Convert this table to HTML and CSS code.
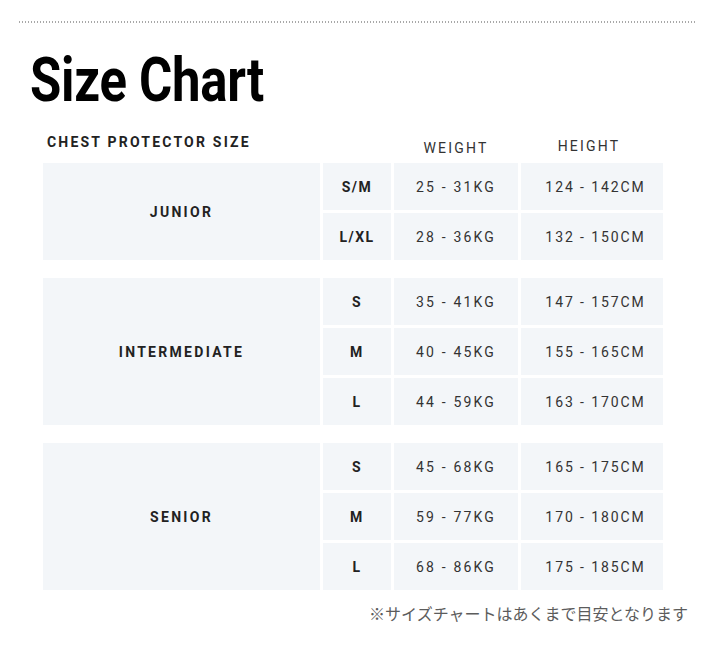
FILE: index.html
```html
<!DOCTYPE html>
<html lang="ja">
<head>
<meta charset="utf-8">
<title>Size Chart</title>
<link rel="stylesheet" href="styles.css">
</head>
<body>
<div class="page">
  <div class="rule"></div>
  <h1 class="title"><span class="title-text">Size Chart</span></h1>
  <div class="chart">
    <div class="head">
      <div class="head-main">CHEST PROTECTOR SIZE</div>
      <div class="head-weight">WEIGHT</div>
      <div class="head-height">HEIGHT</div>
    </div>
    <div class="block">
      <div class="cat rows-2">JUNIOR</div>
      <div class="size">S/M</div><div class="val">25 - 31KG</div><div class="val hgt">124 - 142CM</div>
      <div class="size">L/XL</div><div class="val">28 - 36KG</div><div class="val hgt">132 - 150CM</div>
    </div>
    <div class="block">
      <div class="cat rows-3">INTERMEDIATE</div>
      <div class="size">S</div><div class="val">35 - 41KG</div><div class="val hgt">147 - 157CM</div>
      <div class="size">M</div><div class="val">40 - 45KG</div><div class="val hgt">155 - 165CM</div>
      <div class="size">L</div><div class="val">44 - 59KG</div><div class="val hgt">163 - 170CM</div>
    </div>
    <div class="block">
      <div class="cat rows-3">SENIOR</div>
      <div class="size">S</div><div class="val">45 - 68KG</div><div class="val hgt">165 - 175CM</div>
      <div class="size">M</div><div class="val">59 - 77KG</div><div class="val hgt">170 - 180CM</div>
      <div class="size">L</div><div class="val">68 - 86KG</div><div class="val hgt">175 - 185CM</div>
    </div>
  </div>
  <p class="note">※サイズチャートはあくまで目安となります</p>
</div>
</body>
</html>
```
FILE: styles.css
```css
html, body {
  margin: 0;
  padding: 0;
  background: #ffffff;
}
.page {
  width: 720px;
  height: 646px;
  padding-top: 21px;
  box-sizing: border-box;
  font-family: Roboto, "Noto Sans", sans-serif;
  color: #222;
}
.rule {
  margin-left: 19px;
  width: 678px;
  height: 2px;
  background: repeating-linear-gradient(to right, #a8a8a8 0 1.5px, transparent 1.5px 3px);
}
.title {
  margin: 26px 0 0 30px;
  font-family: Roboto, sans-serif;
  font-weight: 700;
  font-size: 62px;
  line-height: 61px;
  letter-spacing: -0.3px;
  color: #000;
}
.title-text {
  display: inline-block;
  transform: scaleX(0.82);
  transform-origin: left center;
}
.chart {
  margin: 19px 0 0 43px;
  width: 620px;
}
.head {
  display: grid;
  grid-template-columns: 348px 124px 142px;
  column-gap: 3px;
  height: 34px;
  font-size: 14px;
  letter-spacing: 2.2px;
}
.head-main {
  font-weight: 700;
  padding-left: 4px;
  padding-top: 5px;
  align-self: start;
  color: #222;
}
.head-weight,
.head-height {
  text-align: center;
  color: #333;
  align-self: end;
  padding-bottom: 7px;
}
.head-height {
  padding-bottom: 9px;
  padding-right: 6px;
}
.block {
  display: grid;
  grid-template-columns: 277px 68px 124px 142px;
  grid-auto-rows: 47px;
  gap: 3px;
  margin-bottom: 18px;
}
.block > div {
  background: #f3f6f9;
  display: flex;
  align-items: center;
  justify-content: center;
  font-size: 14px;
}
.cat {
  font-weight: 700;
  letter-spacing: 2.3px;
  color: #222;
}
.rows-2 { grid-row: span 2; }
.rows-3 { grid-row: span 3; }
.size {
  font-weight: 700;
  letter-spacing: 1.5px;
  color: #222;
}
.val {
  letter-spacing: 2.2px;
  color: #333;
}
.val.hgt {
  letter-spacing: 1.9px;
  padding-left: 7px;
}
.note {
  margin: -7px 32px 0 0;
  text-align: right;
  font-family: "Noto Sans CJK JP", sans-serif;
  font-size: 16px;
  line-height: 24px;
  color: #5c5c5c;
}
```
